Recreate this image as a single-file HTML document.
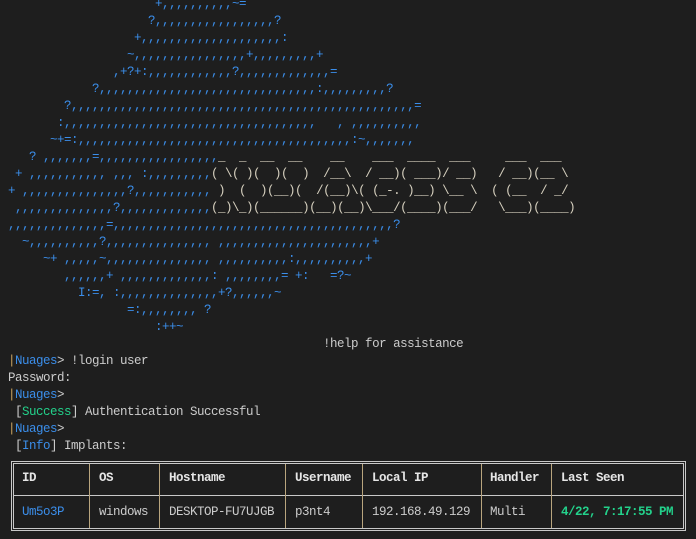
<!DOCTYPE html>
<html><head><meta charset="utf-8"><style>
html,body{margin:0;padding:0;background:#1e1e1e;width:696px;height:539px;overflow:hidden;}
pre{position:absolute;left:8px;top:-4px;margin:0;font-family:"Liberation Mono",monospace;font-size:12.5px;letter-spacing:-0.5px;line-height:17px;color:#cccccc;}
.b{color:#3b8eea}.a{color:#d6d0bf}.y{color:#c9a35f}.g{color:#23d18b}
.t{position:absolute;font-family:"Liberation Mono",monospace;font-size:12.5px;letter-spacing:-0.5px;line-height:14px;color:#cccccc;}
.h{font-weight:bold;color:#e6e6e6}
.l{position:absolute;background:#c8c8c8}
.v{position:absolute;background:#b9a57e;width:1px;top:464px;height:64px}
</style></head><body>
<pre><span class="b">                     +,,,,,,,,,,~=
                    ?,,,,,,,,,,,,,,,,,?
                  +,,,,,,,,,,,,,,,,,,,,:
                 ~,,,,,,,,,,,,,,,,+,,,,,,,,,+
               ,+?+:,,,,,,,,,,,,?,,,,,,,,,,,,,=
            ?,,,,,,,,,,,,,,,,,,,,,,,,,,,,,,,:,,,,,,,,,?
        ?,,,,,,,,,,,,,,,,,,,,,,,,,,,,,,,,,,,,,,,,,,,,,,,,,=
       :,,,,,,,,,,,,,,,,,,,,,,,,,,,,,,,,,,,,   , ,,,,,,,,,,
      ~+=:,,,,,,,,,,,,,,,,,,,,,,,,,,,,,,,,,,,,,,,:~,,,,,,,
   ? ,,,,,,,=,,,,,,,,,,,,,,,,,</span><span class="a">_  _  __  __    __    ___  ____  ___     ___  ___</span>
<span class="b"> + ,,,,,,,,,,, ,,, :,,,,,,,,,</span><span class="a">( \( )(  )(  )  /__\  / __)( ___)/ __)   / __)(__ \</span>
<span class="b">+ ,,,,,,,,,,,,,,,?,,,,,,,,,,,</span><span class="a"> )  (  )(__)(  /(__)\( (_-. )__) \__ \  ( (__  / _/</span>
<span class="b"> ,,,,,,,,,,,,,,?,,,,,,,,,,,,,</span><span class="a">(_)\_)(______)(__)(__)\___/(____)(___/   \___)(____)</span>
<span class="b">,,,,,,,,,,,,,,=,,,,,,,,,,,,,,,,,,,,,,,,,,,,,,,,,,,,,,,,?
  ~,,,,,,,,,,?,,,,,,,,,,,,,,, ,,,,,,,,,,,,,,,,,,,,,,+
     ~+ ,,,,,~,,,,,,,,,,,,,,, ,,,,,,,,,,:,,,,,,,,,,+
        ,,,,,,+ ,,,,,,,,,,,,,: ,,,,,,,,= +:   =?~
          I:=, :,,,,,,,,,,,,,,+?,,,,,,~
                 =:,,,,,,,, ?
                     :++~</span>
                                             !help for assistance
<span class="y">|</span><span class="b">Nuages</span>&gt; !login user
Password:
<span class="y">|</span><span class="b">Nuages</span>&gt;
 [<span class="g">Success</span>] Authentication Successful
<span class="y">|</span><span class="b">Nuages</span>&gt;
 [<span class="b">Info</span>] Implants:</pre>

<div class="l" style="left:11px;top:461px;width:675px;height:1px"></div>
<div class="l" style="left:13px;top:463px;width:671px;height:1px"></div>
<div class="l" style="left:11px;top:530px;width:675px;height:1px"></div>
<div class="l" style="left:13px;top:528px;width:671px;height:1px"></div>
<div class="l" style="left:11px;top:461px;width:1px;height:70px"></div>
<div class="l" style="left:13px;top:463px;width:1px;height:66px"></div>
<div class="l" style="left:685px;top:461px;width:1px;height:70px"></div>
<div class="l" style="left:683px;top:463px;width:1px;height:66px"></div>
<div class="l" style="left:13px;top:495px;width:671px;height:1px"></div>
<div class="v" style="left:89px"></div>
<div class="v" style="left:159px"></div>
<div class="v" style="left:285px"></div>
<div class="v" style="left:362px"></div>
<div class="v" style="left:481px"></div>
<div class="v" style="left:551px"></div>

<div class="t h" style="left:22px;top:471px">ID</div>
<div class="t h" style="left:99px;top:471px">OS</div>
<div class="t h" style="left:169px;top:471px">Hostname</div>
<div class="t h" style="left:295px;top:471px">Username</div>
<div class="t h" style="left:372px;top:471px">Local IP</div>
<div class="t h" style="left:490px;top:471px">Handler</div>
<div class="t h" style="left:561px;top:471px">Last Seen</div>

<div class="t" style="left:22px;top:505px;color:#3b8eea">Um5o3P</div>
<div class="t" style="left:99px;top:505px">windows</div>
<div class="t" style="left:169px;top:505px">DESKTOP-FU7UJGB</div>
<div class="t" style="left:295px;top:505px">p3nt4</div>
<div class="t" style="left:372px;top:505px">192.168.49.129</div>
<div class="t" style="left:490px;top:505px">Multi</div>
<div class="t" style="left:561px;top:505px;color:#23d18b;font-weight:bold">4/22, 7:17:55 PM</div>
</body></html>
